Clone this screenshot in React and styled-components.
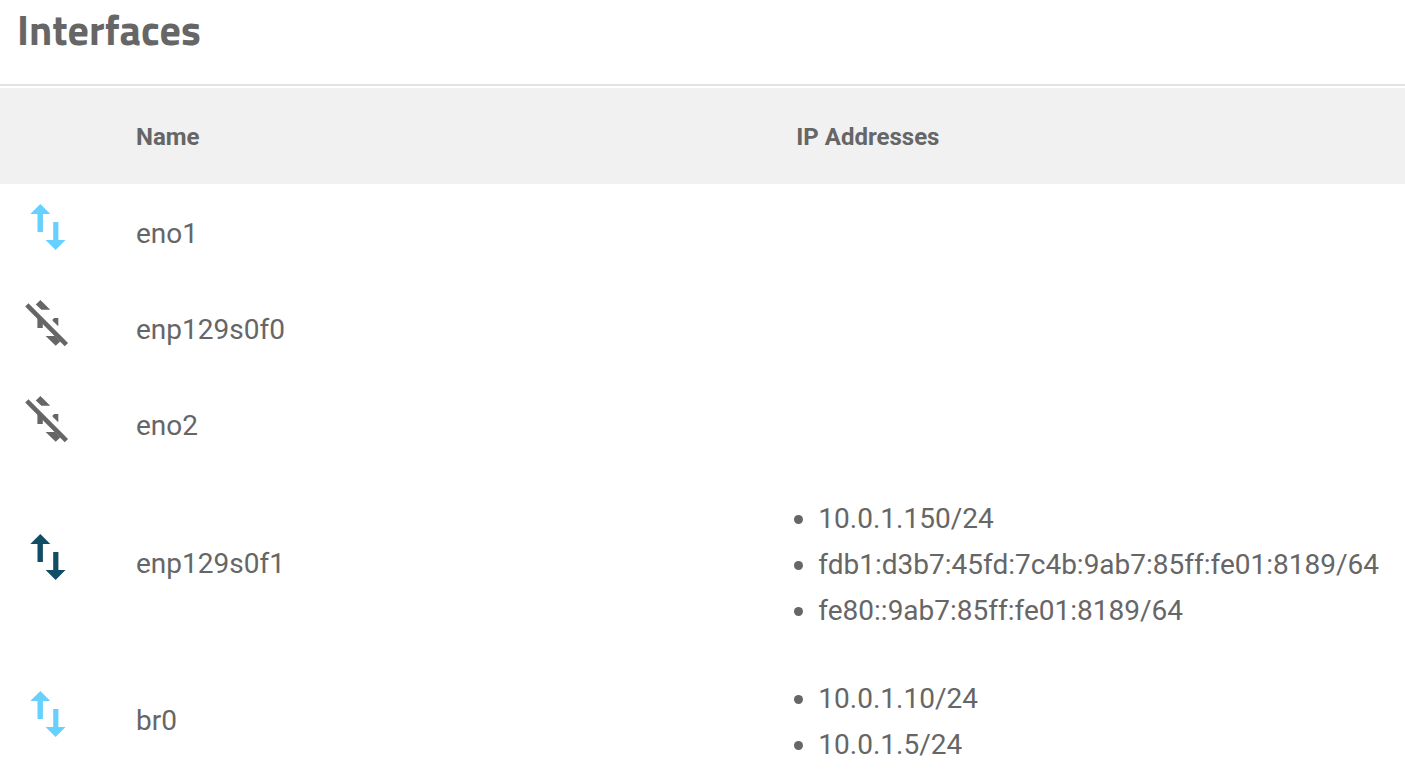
import React from 'react'
import styled, { createGlobalStyle } from 'styled-components'

const COLORS = {
  text: '#666666',
  border: '#e3e3e3',
  header: '#f1f1f1',
  white: '#ffffff',
  idle: '#66d0ff',
  active: '#124d66',
}

const INTERFACES = [
  { name: 'eno1', state: 'idle', addresses: [] },
  { name: 'enp129s0f0', state: 'down', addresses: [] },
  { name: 'eno2', state: 'down', addresses: [] },
  {
    name: 'enp129s0f1',
    state: 'active',
    addresses: [
      '10.0.1.150/24',
      'fdb1:d3b7:45fd:7c4b:9ab7:85ff:fe01:8189/64',
      'fe80::9ab7:85ff:fe01:8189/64',
    ],
  },
  { name: 'br0', state: 'idle', addresses: ['10.0.1.10/24', '10.0.1.5/24'] },
]

const StateIcon = ({ state }) => (
  <Icon viewBox="-1 1 62 62" state={state} aria-hidden="true">
    {state === 'down' ? (
      <>
        <path d="M18.8 12.4L23.4 8L33.2 17.8H24.4Z" />
        <path d="M20.4 24L25.8 29.4V36H20.4Z" />
        <path d="M35.6 28.8V27.6L37.2 26H41.3V34.2Z" />
        <path d="M28.6 44H38L43.2 49.4L38.7 53.8Z" />
        <path d="M9.8 12.8L49.4 52.6" fill="none" stroke="currentColor" strokeWidth="4.6" />
      </>
    ) : (
      <>
        <path d="M23.3 7.9L33.3 17.9H25.9V36H20.5V17.9H13.3Z" />
        <path d="M36.2 26H41.4V44H48.5L38.6 54L28.6 44H36.2Z" />
      </>
    )}
  </Icon>
)

const App = () => (
  <Card>
    <GlobalStyle />
    <Title>Interfaces</Title>
    <Table>
      <thead>
        <HeaderRow>
          <IconHeading aria-label="State" />
          <NameHeading>Name</NameHeading>
          <Heading>IP Addresses</Heading>
        </HeaderRow>
      </thead>
      <tbody>
        {INTERFACES.map(({ name, state, addresses }) => (
          <Row key={name}>
            <IconCell>
              <StateIcon state={state} />
            </IconCell>
            <Cell>{name}</Cell>
            <AddressCell>
              {addresses.length > 0 && (
                <AddressList>
                  {addresses.map(address => (
                    <Address key={address}>{address}</Address>
                  ))}
                </AddressList>
              )}
            </AddressCell>
          </Row>
        ))}
      </tbody>
    </Table>
  </Card>
)

const GlobalStyle = createGlobalStyle`
    *, *::before, *::after {
        box-sizing: border-box;
    }

    body {
        margin: 0;
        background: ${COLORS.white};
        color: ${COLORS.text};
        font-family: Roboto, sans-serif;
        font-size: 28px;
    }
`

const Card = styled.main`
    height: 100vh;
    overflow: hidden;
`

const Title = styled.h1`
    margin: 0;
    padding: 0 17px 26px;
    border-bottom: 2px solid ${COLORS.border};
    font-family: 'Titillium Web', Roboto, sans-serif;
    font-size: 42px;
    font-weight: 700;
    line-height: 58px;
`

const Table = styled.table`
    width: 100%;
    margin-top: 2px;
    border-collapse: collapse;
    table-layout: fixed;
`

const HeaderRow = styled.tr`
    height: 96px;
    background: ${COLORS.header};
`

const Heading = styled.th`
    padding: 2px 16px 0;
    font-size: 24px;
    font-weight: 700;
    text-align: left;
`

const IconHeading = styled(Heading)`
    width: 120px;
`

const NameHeading = styled(Heading)`
    width: 47%;
`

const Row = styled.tr`
    height: 96px;
`

const Cell = styled.td`
    padding: 4px 16px 0;
    line-height: 46px;
`

const IconCell = styled(Cell)`
    padding: 0 16px 8px;
`

const AddressCell = styled(Cell)`
    padding: 24px 16px 18px;
`

const Icon = styled.svg`
    display: block;
    width: 62px;
    height: 62px;
    fill: currentColor;
    color: ${props => COLORS[props.state] || COLORS.text};
`

const AddressList = styled.ul`
    margin: 0;
    padding: 0 0 0 22px;
`

const Address = styled.li`
    white-space: nowrap;
`

export default App
